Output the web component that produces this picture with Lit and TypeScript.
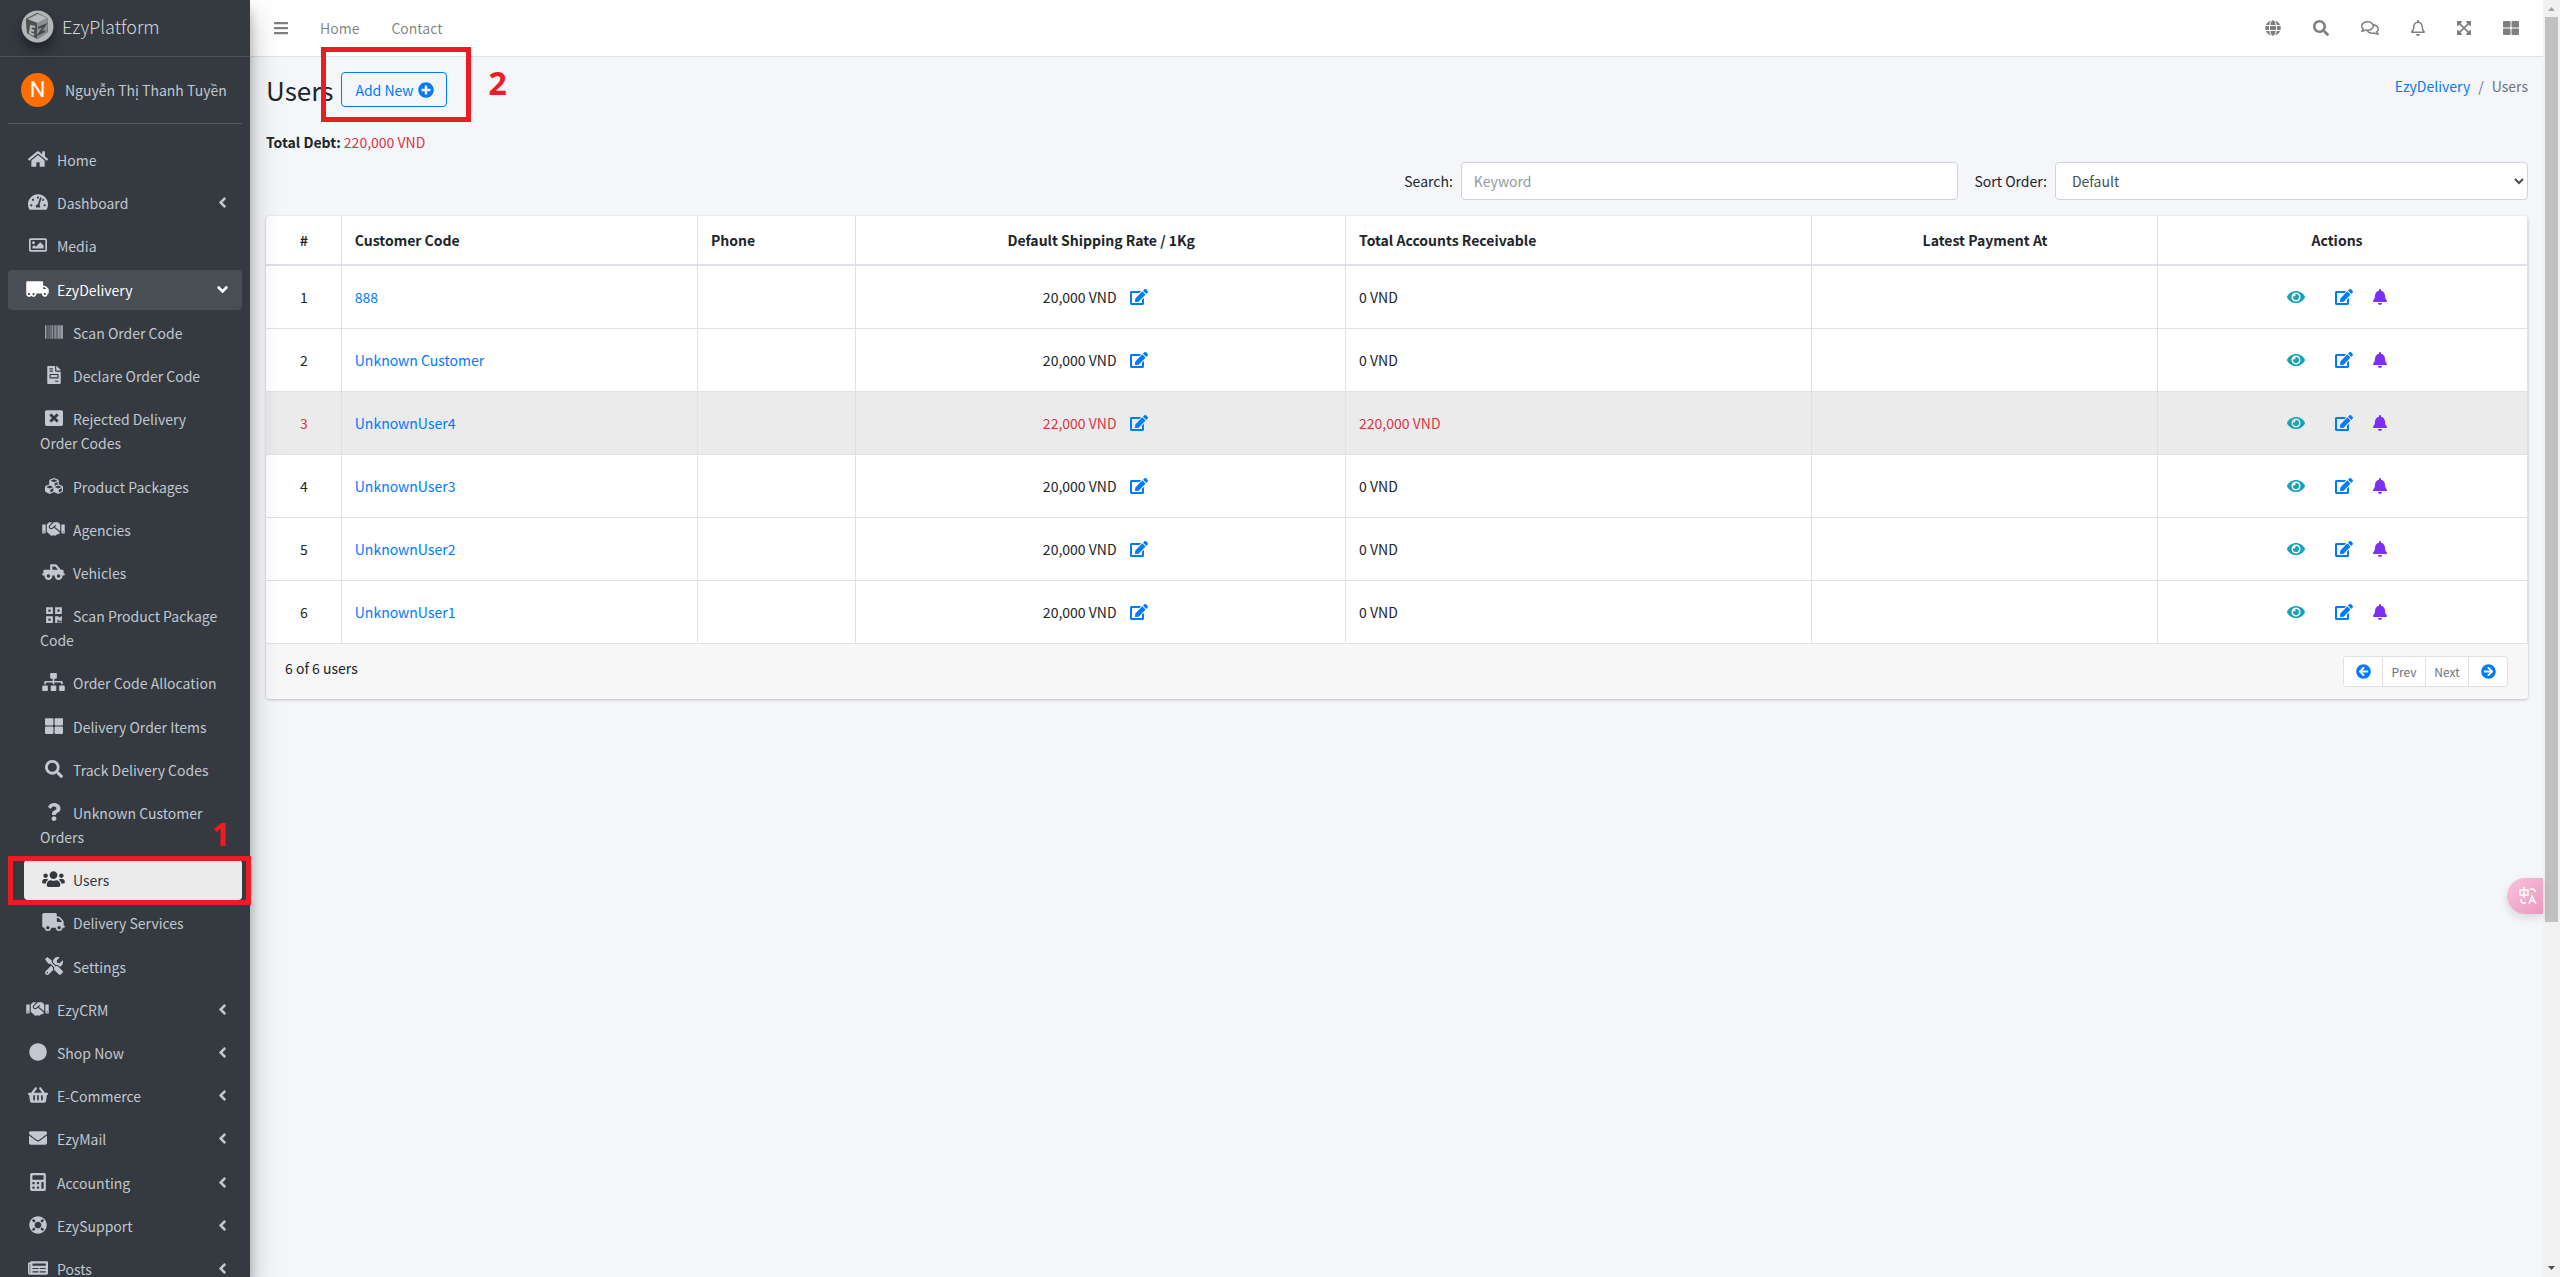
import { LitElement, html, css, svg, nothing } from "lit";
import { customElement, property } from "lit/decorators.js";
import { classMap } from "lit/directives/class-map.js";

/* Icon outlines, each as [view box width, path]; every one is 512 units high. */
const ICONS: Record<string, [number, string]> = {
  home: [576, "M280.37 148.26L96 300.11V464a16 16 0 0 0 16 16l112.06-.29a16 16 0 0 0 15.92-16V368a16 16 0 0 1 16-16h64a16 16 0 0 1 16 16v95.64a16 16 0 0 0 16 16.05L464 480a16 16 0 0 0 16-16V300L295.67 148.26a12.19 12.19 0 0 0-15.3 0zM571.6 251.47L488 182.56V44.05a12 12 0 0 0-12-12h-56a12 12 0 0 0-12 12v72.61L318.47 43a48 48 0 0 0-61 0L4.34 251.47a12 12 0 0 0-1.6 16.9l25.5 31A12 12 0 0 0 45.15 301l235.22-193.74a12.19 12.19 0 0 1 15.3 0L530.9 301a12 12 0 0 0 16.9-1.6l25.5-31a12 12 0 0 0-1.7-16.93z"],
  gauge: [576, "M288 32C128.94 32 0 160.94 0 320c0 52.8 14.25 102.26 39.06 144.8 5.61 9.62 16.3 15.2 27.44 15.2h443c11.14 0 21.83-5.58 27.44-15.2C561.75 422.26 576 372.8 576 320c0-159.06-128.94-288-288-288zm0 64c14.71 0 26.58 10.13 30.32 23.65-1.11 2.26-2.64 4.23-3.45 6.67l-9.22 27.67c-5.13 3.49-10.97 6.01-17.64 6.01-17.67 0-32-14.33-32-32S270.33 96 288 96zM96 384c-17.67 0-32-14.33-32-32s14.33-32 32-32 32 14.33 32 32-14.33 32-32 32zm48-160c-17.67 0-32-14.33-32-32s14.33-32 32-32 32 14.33 32 32-14.33 32-32 32zm246.77-72.41l-61.33 184C343.13 347.33 352 364.54 352 384c0 11.72-3.38 22.55-8.88 32H232.88c-5.5-9.45-8.88-20.28-8.88-32 0-33.94 26.5-61.43 59.9-63.59l61.34-184.01c4.17-12.56 17.73-19.45 30.36-15.17 12.57 4.19 19.35 17.79 15.17 30.36zm14.66 57.2l15.52-46.55c3.47-1.29 7.13-2.23 11.05-2.23 17.67 0 32 14.33 32 32s-14.33 32-32 32c-11.38-.01-20.89-6.28-26.57-15.22zM480 384c-17.67 0-32-14.33-32-32s14.33-32 32-32 32 14.33 32 32-14.33 32-32 32z"],
  image: [512, "M464 64H48C21.49 64 0 85.49 0 112v288c0 26.51 21.49 48 48 48h416c26.51 0 48-21.49 48-48V112c0-26.51-21.49-48-48-48zm-6 336H54a6 6 0 0 1-6-6V118a6 6 0 0 1 6-6h404a6 6 0 0 1 6 6v276a6 6 0 0 1-6 6zM128 152c-22.091 0-40 17.909-40 40s17.909 40 40 40 40-17.909 40-40-17.909-40-40-40zM96 352h320v-80l-87.515-87.515c-4.686-4.686-12.284-4.686-16.971 0L192 304l-39.515-39.515c-4.686-4.686-12.284-4.686-16.971 0L96 304v48z"],
  lorry: [640, "M621.3 237.3l-58.5-58.5c-12-12-28.3-18.7-45.3-18.7H480V64c0-17.7-14.3-32-32-32H32C14.3 32 0 46.3 0 64v336c0 44.2 35.8 80 80 80 26.3 0 49.4-12.9 64-32.4 14.6 19.6 37.7 32.4 64 32.4 44.2 0 80-35.8 80-80 0-5.5-.6-10.8-1.6-16h163.2c-1.1 5.2-1.6 10.5-1.6 16 0 44.2 35.8 80 80 80s80-35.8 80-80c0-5.5-.6-10.8-1.6-16H624c8.8 0 16-7.2 16-16v-85.5c0-17-6.7-33.2-18.7-45.2zM80 432c-17.6 0-32-14.4-32-32s14.4-32 32-32 32 14.4 32 32-14.4 32-32 32zm128 0c-17.6 0-32-14.4-32-32s14.4-32 32-32 32 14.4 32 32-14.4 32-32 32zm272-224h37.5c4.3 0 8.3 1.7 11.3 4.7l43.3 43.3H480v-48zm48 224c-17.6 0-32-14.4-32-32s14.4-32 32-32 32 14.4 32 32-14.4 32-32 32z"],
  truck: [640, "M624 352h-16V243.9c0-12.7-5.1-24.9-14.1-33.9L494 110.1c-9-9-21.2-14.1-33.9-14.1H416V48c0-26.5-21.5-48-48-48H48C21.5 0 0 21.5 0 48v320c0 26.5 21.5 48 48 48h16c0 53 43 96 96 96s96-43 96-96h128c0 53 43 96 96 96s96-43 96-96h48c8.8 0 16-7.2 16-16v-32c0-8.8-7.2-16-16-16zM160 464c-26.5 0-48-21.5-48-48s21.5-48 48-48 48 21.5 48 48-21.5 48-48 48zm320 0c-26.5 0-48-21.5-48-48s21.5-48 48-48 48 21.5 48 48-21.5 48-48 48zm80-208H416V144h44.1l99.9 99.9V256z"],
  barcode: [512, "M0 448V64h18v384H0zm26.857-.273V64H36v383.727h-9.143zm27.143 0V64h8.857v383.727H54zm44.857 0V64h8.857v383.727h-8.857zm36 0V64h17.714v383.727h-17.714zm44.857 0V64h8.857v383.727h-8.857zm18 0V64h8.857v383.727h-8.857zm18 0V64h8.857v383.727h-8.857zm35.715 0V64h18v383.727h-18zm44.857 0V64h18v383.727h-18zm35.999 0V64h18.001v383.727h-18.001zm36.001 0V64h18.001v383.727h-18.001zm26.857 0V64h18v383.727h-18zm45.143 0V64h26.857v383.727h-26.857zm35.714 0V64h9.143v383.727H476zm18 .273V64h18v384h-18z"],
  invoice: [384, "M288 256H96v64h192v-64zm89-151L279.1 7c-4.5-4.5-10.6-7-17-7H256v128h128v-6.1c0-6.3-2.5-12.4-7-16.9zm-153 31V0H24C10.7 0 0 10.7 0 24v464c0 13.3 10.7 24 24 24h336c13.3 0 24-10.7 24-24V160H248c-13.2 0-24-10.8-24-24zM64 72c0-4.42 3.58-8 8-8h80c4.42 0 8 3.58 8 8v16c0 4.42-3.58 8-8 8H72c-4.42 0-8-3.58-8-8V72zm0 64c0-4.42 3.58-8 8-8h80c4.42 0 8 3.58 8 8v16c0 4.42-3.58 8-8 8H72c-4.42 0-8-3.58-8-8v-16zm256 304c0 4.42-3.58 8-8 8h-80c-4.42 0-8-3.58-8-8v-16c0-4.42 3.58-8 8-8h80c4.42 0 8 3.58 8 8v16zm0-200v96c0 8.84-7.16 16-16 16H80c-8.84 0-16-7.16-16-16v-96c0-8.84 7.16-16 16-16h224c8.84 0 16 7.16 16 16z"],
  reject: [512, "M464 32H48C21.5 32 0 53.5 0 80v352c0 26.5 21.5 48 48 48h416c26.5 0 48-21.5 48-48V80c0-26.5-21.5-48-48-48zm-83.6 290.5c4.8 4.8 4.8 12.6 0 17.4l-40.5 40.5c-4.8 4.8-12.6 4.8-17.4 0L256 313.3l-66.5 67.1c-4.8 4.8-12.6 4.8-17.4 0l-40.5-40.5c-4.8-4.8-4.8-12.6 0-17.4l67.1-66.5-67.1-66.5c-4.8-4.8-4.8-12.6 0-17.4l40.5-40.5c4.8-4.8 12.6-4.8 17.4 0l66.5 67.1 66.5-67.1c4.8-4.8 12.6-4.8 17.4 0l40.5 40.5c4.8 4.8 4.8 12.6 0 17.4L313.3 256l67.1 66.5z"],
  cubes: [512, "M488.6 250.2L392 214V105.5c0-15-9.3-28.4-23.4-33.7l-100-37.5c-8.1-3.1-17.1-3.1-25.3 0l-100 37.5c-14.1 5.3-23.4 18.7-23.4 33.7V214l-96.6 36.2C9.3 255.5 0 268.9 0 283.9V394c0 13.6 7.7 26.1 19.9 32.2l100 50c10.1 5.1 22.1 5.1 32.2 0l103.9-52 103.9 52c10.1 5.1 22.1 5.1 32.2 0l100-50c12.2-6.1 19.9-18.6 19.9-32.2V283.9c0-15-9.3-28.4-23.4-33.7zM358 214.8l-85 31.9v-68.2l85-37v73.3zM154 104.1l102-38.2 102 38.2v.6l-102 41.4-102-41.4v-.6zm84 291.1l-85 42.5v-79.1l85-38.8v75.4zm0-112l-102 41.4-102-41.4v-.6l102-38.2 102 38.2v.6zm240 112l-85 42.5v-79.1l85-38.8v75.4zm0-112l-102 41.4-102-41.4v-.6l102-38.2 102 38.2v.6z"],
  handshake: [640, "M434.7 64h-85.9c-8 0-15.7 3-21.6 8.4l-98.3 90c-.1.1-.2.3-.3.4-16.6 15.6-16.3 40.5-2.1 56 12.7 13.9 39.4 17.6 56.1 2.7.1-.1.3-.1.4-.2l79.9-73.2c6.5-5.9 16.7-5.5 22.6 1 6 6.5 5.5 16.6-1 22.6l-26.1 23.9L504 313.8c2.9 2.4 5.5 5 7.9 7.7V128l-54.6-54.6c-5.9-6-14.1-9.4-22.6-9.4zM544 128.2v223.9c0 17.7 14.3 32 32 32h64V128.2h-96zm48 223.9c-8.8 0-16-7.2-16-16s7.2-16 16-16 16 7.2 16 16-7.2 16-16 16zM0 384h64c17.7 0 32-14.3 32-32V128.2H0V384zm48-63.9c8.8 0 16 7.2 16 16s-7.2 16-16 16-16-7.2-16-16c0-8.9 7.2-16 16-16zm435.9 18.6L334.6 217.5l-30 27.5c-29.7 27.1-75.2 24.5-101.7-4.4-26.9-29.4-24.8-74.9 4.4-101.7L289.1 64h-83.8c-8.5 0-16.6 3.4-22.6 9.4L128 128v223.9h18.3l90.5 81.9c27.4 22.3 67.7 18.1 90-9.3l.2-.2 17.9 15.5c15.9 13 39.4 10.5 52.3-5.4l31.4-38.6 5.4 4.4c13.7 11.1 33.9 9.1 45-4.7l9.5-11.7c11.2-13.8 9.1-33.9-4.6-45.1z"],
  pickup: [640, "M624 288h-16v-64c0-17.67-14.33-32-32-32h-48L419.22 56.02A64.025 64.025 0 0 0 369.24 32H256c-17.67 0-32 14.33-32 32v128H64c-17.67 0-32 14.33-32 32v64H16c-8.84 0-16 7.16-16 16v32c0 8.84 7.16 16 16 16h49.61c-.76 5.27-1.61 10.52-1.61 16 0 61.86 50.14 112 112 112s112-50.14 112-112c0-5.48-.85-10.73-1.61-16h67.23c-.76 5.27-1.61 10.52-1.61 16 0 61.86 50.14 112 112 112s112-50.14 112-112c0-5.48-.85-10.73-1.61-16H624c8.84 0 16-7.16 16-16v-32c0-8.84-7.16-16-16-16zM288 96h81.24l76.8 96H288V96zM176 416c-26.47 0-48-21.53-48-48s21.53-48 48-48 48 21.53 48 48-21.53 48-48 48zm288 0c-26.47 0-48-21.53-48-48s21.53-48 48-48 48 21.53 48 48-21.53 48-48 48z"],
  qrcode: [448, "M0 224h192V32H0v192zM64 96h64v64H64V96zm192-64v192h192V32H256zm128 128h-64V96h64v64zM0 480h192V288H0v192zm64-128h64v64H64v-64zm352-64h32v128h-96v-32h-32v96h-64V288h96v32h64v-32zm0 160h32v32h-32v-32zm-64 0h32v32h-32v-32z"],
  sitemap: [640, "M128 352H32c-17.67 0-32 14.33-32 32v96c0 17.67 14.33 32 32 32h96c17.67 0 32-14.33 32-32v-96c0-17.67-14.33-32-32-32zm-24-80h192v48h48v-48h192v48h48v-57.59c0-21.17-17.23-38.41-38.41-38.41H344v-64h40c17.67 0 32-14.33 32-32V32c0-17.67-14.33-32-32-32H256c-17.67 0-32 14.33-32 32v96c0 17.67 14.33 32 32 32h40v64H94.41C73.23 224 56 241.23 56 262.41V320h48v-48zm264 80h-96c-17.67 0-32 14.33-32 32v96c0 17.67 14.33 32 32 32h96c17.67 0 32-14.33 32-32v-96c0-17.67-14.33-32-32-32zm240 0h-96c-17.67 0-32 14.33-32 32v96c0 17.67 14.33 32 32 32h96c17.67 0 32-14.33 32-32v-96c0-17.67-14.33-32-32-32z"],
  tiles: [512, "M296 32h192c13.255 0 24 10.745 24 24v160c0 13.255-10.745 24-24 24H296c-13.255 0-24-10.745-24-24V56c0-13.255 10.745-24 24-24zm-80 0H24C10.745 32 0 42.745 0 56v160c0 13.255 10.745 24 24 24h192c13.255 0 24-10.745 24-24V56c0-13.255-10.745-24-24-24zM0 296v160c0 13.255 10.745 24 24 24h192c13.255 0 24-10.745 24-24V296c0-13.255-10.745-24-24-24H24c-13.255 0-24 10.745-24 24zm296 184h192c13.255 0 24-10.745 24-24V296c0-13.255-10.745-24-24-24H296c-13.255 0-24 10.745-24 24v160c0 13.255 10.745 24 24 24z"],
  search: [512, "M505 442.7L405.3 343c-4.5-4.5-10.6-7-17-7H372c27.6-35.3 44-79.7 44-128C416 93.1 322.9 0 208 0S0 93.1 0 208s93.1 208 208 208c48.3 0 92.7-16.4 128-44v16.3c0 6.4 2.5 12.5 7 17l99.7 99.7c9.4 9.4 24.6 9.4 33.9 0l28.3-28.3c9.4-9.4 9.4-24.6.1-34zM208 336c-70.7 0-128-57.2-128-128 0-70.7 57.2-128 128-128 70.7 0 128 57.2 128 128 0 70.7-57.2 128-128 128z"],
  question: [384, "M202.021 0C122.202 0 70.503 32.703 29.914 91.026c-7.363 10.58-5.093 25.086 5.178 32.874l43.138 32.709c10.373 7.865 25.132 6.026 33.253-4.148 25.049-31.381 43.63-49.449 82.757-49.449 30.764 0 68.816 19.799 68.816 49.631 0 22.552-18.617 34.134-48.993 51.164-35.423 19.86-82.299 44.576-82.299 106.405V320c0 13.255 10.745 24 24 24h72.471c13.255 0 24-10.745 24-24v-5.773c0-42.86 125.268-44.645 125.268-160.627C377.504 66.256 286.902 0 202.021 0zM192 373.459c-38.196 0-69.271 31.075-69.271 69.271 0 38.195 31.075 69.27 69.271 69.27s69.271-31.075 69.271-69.271-31.075-69.27-69.271-69.27z"],
  users: [640, "M96 224c35.3 0 64-28.7 64-64s-28.7-64-64-64-64 28.7-64 64 28.7 64 64 64zm448 0c35.3 0 64-28.7 64-64s-28.7-64-64-64-64 28.7-64 64 28.7 64 64 64zm32 32h-64c-17.6 0-33.5 7.1-45.1 18.6 40.3 22.1 68.9 62 75.1 109.4h66c17.7 0 32-14.3 32-32v-32c0-35.3-28.7-64-64-64zm-256 0c61.9 0 112-50.1 112-112S381.9 32 320 32 208 82.1 208 144s50.1 112 112 112zm76.8 32h-8.3c-20.8 10-43.9 16-68.5 16s-47.6-6-68.5-16h-8.3C179.6 288 128 339.6 128 403.2V432c0 26.5 21.5 48 48 48h288c26.5 0 48-21.5 48-48v-28.8c0-63.6-51.6-115.2-115.2-115.2zm-223.7-13.4C161.5 263.1 145.6 256 128 256H64c-35.3 0-64 28.7-64 64v32c0 17.7 14.3 32 32 32h65.9c6.3-47.4 34.9-87.3 75.2-109.4z"],
  tools: [512, "M501.1 395.7L384 278.6c-23.1-23.1-57.6-27.6-85.4-13.9L192 158.1V96L64 0 0 64l96 128h62.1l106.6 106.6c-13.6 27.8-9.2 62.3 13.9 85.4l117.1 117.1c14.6 14.6 38.2 14.6 52.7 0l52.7-52.7c14.5-14.6 14.5-38.2 0-52.7zM331.7 225c28.3 0 54.9 11 74.9 31l19.4 19.4c15.8-6.9 30.8-16.5 43.8-29.5 37.1-37.1 49.7-89.3 37.9-136.7-2.2-9-13.5-12.1-20.1-5.5l-74.4 74.4-67.9-11.3L334 98.9l74.4-74.4c6.6-6.6 3.4-17.9-5.7-20.2-47.4-11.7-99.6.9-136.6 37.9-28.5 28.5-41.9 66.1-41.2 103.6l82.1 82.1c8.1-1.9 16.5-2.9 24.7-2.9zm-103.9 82l-56.7-56.7L18.7 402.8c-25 25-25 65.5 0 90.5s65.5 25 90.5 0l123.6-123.6c-7.6-19.9-9.9-41.6-5-62.7zM64 472c-13.2 0-24-10.8-24-24 0-13.3 10.7-24 24-24s24 10.7 24 24c0 13.2-10.7 24-24 24z"],
  circle: [512, "M256 8C119 8 8 119 8 256s111 248 248 248 248-111 248-248S393 8 256 8z"],
  basket: [576, "M576 216v16c0 13.255-10.745 24-24 24h-8l-26.113 182.788C514.509 462.435 494.257 480 470.37 480H105.63c-23.887 0-44.139-17.565-47.518-41.212L32 256h-8c-13.255 0-24-10.745-24-24v-16c0-13.255 10.745-24 24-24h67.341l106.78-146.821c10.395-14.292 30.407-17.453 44.701-7.058 14.293 10.395 17.453 30.408 7.058 44.701L170.477 192h235.046L326.12 82.821c-10.395-14.292-7.234-34.306 7.059-44.701 14.291-10.395 34.306-7.235 44.701 7.058L484.659 192H552c13.255 0 24 10.745 24 24zM312 392V280c0-13.255-10.745-24-24-24s-24 10.745-24 24v112c0 13.255 10.745 24 24 24s24-10.745 24-24zm112 0V280c0-13.255-10.745-24-24-24s-24 10.745-24 24v112c0 13.255 10.745 24 24 24s24-10.745 24-24zm-224 0V280c0-13.255-10.745-24-24-24s-24 10.745-24 24v112c0 13.255 10.745 24 24 24s24-10.745 24-24z"],
  envelope: [512, "M502.3 190.8c3.9-3.1 9.7-.2 9.7 4.7V400c0 26.5-21.5 48-48 48H48c-26.5 0-48-21.5-48-48V195.6c0-5 5.7-7.8 9.7-4.7 22.4 17.4 52.1 39.5 154.1 113.6 21.1 15.4 56.7 47.8 92.2 47.6 35.7.3 72-32.8 92.3-47.6 102-74.1 131.6-96.3 154-113.7zM256 320c23.2.4 56.6-29.2 73.4-41.4 132.7-96.3 142.8-104.7 173.4-128.7 5.8-4.5 9.2-11.5 9.2-18.9v-19c0-26.5-21.5-48-48-48H48c-26.5 0-48 21.5-48 48v19c0 7.4 3.4 14.3 9.2 18.9 30.6 23.9 40.7 32.4 173.4 128.7 16.8 12.2 50.2 41.8 73.4 41.4z"],
  calculator: [448, "M400 0H48C22.4 0 0 22.4 0 48v416c0 25.6 22.4 48 48 48h352c25.6 0 48-22.4 48-48V48c0-25.6-22.4-48-48-48zM77 384h38q13 0 13 13v38q0 13-13 13H77q-13 0-13-13v-38q0-13 13-13zM77 256h38q13 0 13 13v38q0 13-13 13H77q-13 0-13-13v-38q0-13 13-13zM205 384h38q13 0 13 13v38q0 13-13 13h-38q-13 0-13-13v-38q0-13 13-13zM205 256h38q13 0 13 13v38q0 13-13 13h-38q-13 0-13-13v-38q0-13 13-13zM333 256h38q13 0 13 13v166q0 13-13 13h-38q-13 0-13-13V269q0-13 13-13zM77 64h294q13 0 13 13v102q0 13-13 13H77q-13 0-13-13V77q0-13 13-13z"],
  lifering: [512, "M256 8C119.033 8 8 119.033 8 256s111.033 248 248 248 248-111.033 248-248S392.967 8 256 8zm173.696 119.559l-63.399 63.399c-10.987-18.559-26.67-34.252-45.255-45.255l63.399-63.399a218.396 218.396 0 0 1 45.255 45.255zM256 352c-53.019 0-96-42.981-96-96s42.981-96 96-96 96 42.981 96 96-42.981 96-96 96zM127.559 82.304l63.399 63.399c-18.559 10.987-34.252 26.67-45.255 45.255l-63.399-63.399a218.372 218.372 0 0 1 45.255-45.255zM82.304 384.441l63.399-63.399c10.987 18.559 26.67 34.252 45.255 45.255l-63.399 63.399a218.396 218.396 0 0 1-45.255-45.255zm302.137 45.255l-63.399-63.399c18.559-10.987 34.252-26.67 45.255-45.255l63.399 63.399a218.403 218.403 0 0 1-45.255 45.255z"],
  newspaper: [576, "M552 64H88c-13.255 0-24 10.745-24 24v8H24c-13.255 0-24 10.745-24 24v272c0 30.928 25.072 56 56 56h472c26.51 0 48-21.49 48-48V88c0-13.255-10.745-24-24-24zM56 400a8 8 0 0 1-8-8V144h16v248a8 8 0 0 1-8 8zm236-16H140c-6.627 0-12-5.373-12-12v-8c0-6.627 5.373-12 12-12h152c6.627 0 12 5.373 12 12v8c0 6.627-5.373 12-12 12zm208 0H348c-6.627 0-12-5.373-12-12v-8c0-6.627 5.373-12 12-12h152c6.627 0 12 5.373 12 12v8c0 6.627-5.373 12-12 12zm-208-96H140c-6.627 0-12-5.373-12-12v-8c0-6.627 5.373-12 12-12h152c6.627 0 12 5.373 12 12v8c0 6.627-5.373 12-12 12zm208 0H348c-6.627 0-12-5.373-12-12v-8c0-6.627 5.373-12 12-12h152c6.627 0 12 5.373 12 12v8c0 6.627-5.373 12-12 12zm0-96H140c-6.627 0-12-5.373-12-12v-40c0-6.627 5.373-12 12-12h360c6.627 0 12 5.373 12 12v40c0 6.627-5.373 12-12 12z"],
  angleLeft: [256, "M31.7 239l136-136c9.4-9.4 24.6-9.4 33.9 0l22.6 22.6c9.4 9.4 9.4 24.6 0 33.9L127.9 256l96.4 96.4c9.4 9.4 9.4 24.6 0 33.9L201.7 409c-9.4 9.4-24.6 9.4-33.9 0l-136-136c-9.5-9.4-9.5-24.6-.1-34z"],
  globe: [496, "M336.5 160C322 70.7 287.8 8 248 8s-74 62.7-88.5 152h177zM152 256c0 22.2 1.2 43.5 3.3 64h185.3c2.1-20.5 3.3-41.8 3.3-64s-1.2-43.5-3.3-64H155.3c-2.1 20.5-3.3 41.8-3.3 64zm324.7-96c-28.6-67.9-86.5-120.4-158-141.6 24.4 33.8 41.2 84.7 50 141.6h108zM177.2 18.4C105.8 39.6 47.8 92.1 19.3 160h108c8.7-56.9 25.5-107.8 49.9-141.6zM487.4 192H372.7c2.1 21 3.3 42.5 3.3 64s-1.2 43-3.3 64h114.6c5.5-20.5 8.6-41.8 8.6-64s-3.1-43.5-8.5-64zM120 256c0-21.5 1.2-43 3.3-64H8.6C3.2 212.5 0 233.8 0 256s3.2 43.5 8.6 64h114.6c-2-21-3.2-42.5-3.2-64zm39.5 96c14.5 89.3 48.7 152 88.5 152s74-62.7 88.5-152h-177zm159.3 141.6c71.4-21.2 129.4-73.7 158-141.6h-108c-8.8 56.9-25.6 107.8-50 141.6zM19.3 352c28.6 67.9 86.5 120.4 158 141.6-24.4-33.8-41.2-84.7-50-141.6h-108z"],
  comments: [576, "M532 386.2c27.5-27.1 44-61.1 44-98.2 0-80-76.5-146.1-176.2-157.9C368.3 72.5 294.3 32 208 32 93.1 32 0 103.6 0 192c0 37 16.5 71 44 98.2-15.3 30.7-37.3 54.5-37.7 54.9-6.3 6.7-8.1 16.5-4.4 25 3.6 8.5 12 14 21.2 14 53.5 0 96.7-20.2 125.2-38.8 9.2 2.1 18.7 3.7 28.4 4.9C208.1 407.6 281.8 448 368 448c20.8 0 40.8-2.4 59.8-6.8C456.3 459.7 499.4 480 553 480c9.2 0 17.5-5.5 21.2-14 3.6-8.5 1.9-18.3-4.4-25-.4-.3-22.5-24.1-37.8-54.8zm-392.8-92.3L122.1 305c-14.1 9.1-28.5 16.3-43.1 21.4 2.7-4.7 5.4-9.7 8-14.8l15.5-31.1L77.7 256C64.2 242.6 48 220.7 48 192c0-60.7 73.3-112 160-112s160 51.3 160 112-73.3 112-160 112c-16.5 0-33-1.9-49-5.6l-19.8-4.5zM498.3 352l-24.7 24.4 15.5 31.1c2.6 5.1 5.3 10.1 8 14.8-14.6-5.1-29-12.3-43.1-21.4l-17.1-11.1-19.9 4.6c-16 3.7-32.5 5.6-49 5.6-54 0-102.2-20.1-131.3-49.7C338 339.5 416 272.9 416 192c0-3.4-.4-6.7-.7-10C479.7 196.5 528 238.8 528 288c0 28.7-16.2 50.6-29.7 64z"],
  bellOutline: [448, "M439.39 362.29c-19.32-20.76-55.47-51.99-55.47-154.29 0-77.7-54.48-139.9-127.94-155.16V32c0-17.67-14.32-32-31.98-32s-31.98 14.33-31.98 32v20.84C118.56 68.1 64.08 130.3 64.08 208c0 102.3-36.15 133.53-55.47 154.29-6 6.45-8.66 14.16-8.61 21.71.11 16.4 12.98 32 32.1 32h383.8c19.12 0 32-15.6 32.1-32 .05-7.55-2.61-15.27-8.61-21.71zM67.53 368c21.22-27.97 44.42-74.33 44.53-159.42 0-.2-.06-.38-.06-.58 0-61.86 50.14-112 112-112s112 50.14 112 112c0 .2-.06.38-.06.58.11 85.1 23.31 131.46 44.53 159.42H67.53zM224 512c35.32 0 63.97-28.65 63.97-64H160.03c0 35.35 28.65 64 63.97 64z"],
  bell: [448, "M224 512c35.32 0 63.97-28.65 63.97-64H160.03c0 35.35 28.65 64 63.97 64zm215.39-149.71c-19.32-20.76-55.47-51.99-55.47-154.29 0-77.7-54.48-139.9-127.94-155.16V32c0-17.67-14.32-32-31.98-32s-31.98 14.33-31.98 32v20.84C118.56 68.1 64.08 130.3 64.08 208c0 102.3-36.15 133.53-55.47 154.29-6 6.45-8.66 14.16-8.61 21.71.11 16.4 12.98 32 32.1 32h383.8c19.12 0 32-15.6 32.1-32 .05-7.55-2.61-15.27-8.61-21.71z"],
  expand: [448, "M448 344v112a23.94 23.94 0 0 1-24 24H312c-21.39 0-32.09-25.9-17-41l36.2-36.2L224 295.6 116.77 402.9 153 439c15.09 15.1 4.39 41-17 41H24a23.94 23.94 0 0 1-24-24V344c0-21.4 25.89-32.1 41-17l36.19 36.2L184.46 256 77.18 148.7 41 185c-15.1 15.1-41 4.4-41-17V56a23.94 23.94 0 0 1 24-24h112c21.39 0 32.09 25.9 17 41l-36.2 36.2L224 216.4l107.23-107.3L295 73c-15.09-15.1-4.39-41 17-41h112a23.94 23.94 0 0 1 24 24v112c0 21.4-25.89 32.1-41 17l-36.19-36.2L263.54 256l107.28 107.3L407 327.1c15.1-15.2 41-4.5 41 16.9z"],
  bars: [448, "M16 132h416c8.837 0 16-7.163 16-16V76c0-8.837-7.163-16-16-16H16C7.163 60 0 67.163 0 76v40c0 8.837 7.163 16 16 16zm0 160h416c8.837 0 16-7.163 16-16v-40c0-8.837-7.163-16-16-16H16c-8.837 0-16 7.163-16 16v40c0 8.837 7.163 16 16 16zm0 160h416c8.837 0 16-7.163 16-16v-40c0-8.837-7.163-16-16-16H16c-8.837 0-16 7.163-16 16v40c0 8.837 7.163 16 16 16z"],
  plus: [512, "M256 8C119 8 8 119 8 256s111 248 248 248 248-111 248-248S393 8 256 8zm144 276c0 6.6-5.4 12-12 12h-92v92c0 6.6-5.4 12-12 12h-56c-6.6 0-12-5.4-12-12v-92h-92c-6.6 0-12-5.4-12-12v-56c0-6.6 5.4-12 12-12h92v-92c0-6.6 5.4-12 12-12h56c6.6 0 12 5.4 12 12v92h92c6.6 0 12 5.4 12 12v56z"],
  eye: [576, "M572.52 241.4C518.29 135.59 410.93 64 288 64S57.68 135.64 3.48 241.41a32.35 32.35 0 0 0 0 29.19C57.71 376.41 165.07 448 288 448s230.32-71.64 284.52-177.41a32.35 32.35 0 0 0 0-29.19zM288 400a144 144 0 1 1 144-144 143.93 143.93 0 0 1-144 144zm0-240a95.31 95.31 0 0 0-25.31 3.79 47.85 47.85 0 0 1-66.9 66.9A95.78 95.78 0 1 0 288 160z"],
  edit: [576, "M402.6 83.2l90.2 90.2c3.8 3.8 3.8 10 0 13.8L274.4 405.6l-92.8 10.3c-12.4 1.4-22.9-9.1-21.5-21.5l10.3-92.8L388.8 83.2c3.8-3.8 10-3.8 13.8 0zm162-22.9l-48.8-48.8c-15.2-15.2-39.9-15.2-55.2 0l-35.4 35.4c-3.8 3.8-3.8 10 0 13.8l90.2 90.2c3.8 3.8 10 3.8 13.8 0l35.4-35.4c15.2-15.3 15.2-40 0-55.2zM384 346.2V448H64V128h229.8c3.2 0 6.2-1.3 8.5-3.5l40-40c7.6-7.6 2.2-20.5-8.5-20.5H48C21.5 64 0 85.5 0 112v352c0 26.5 21.5 48 48 48h352c26.5 0 48-21.5 48-48V306.2c0-10.7-12.9-16-20.5-8.5l-40 40c-2.2 2.3-3.5 5.3-3.5 8.5z"],
  arrowLeft: [512, "M256 504C119 504 8 393 8 256S119 8 256 8s248 111 248 248-111 248-248 248zm28.9-143.6L209.4 288H392c13.3 0 24-10.7 24-24v-16c0-13.3-10.7-24-24-24H209.4l75.5-72.4c9.7-9.3 9.9-24.8.4-34.3l-11-10.9c-9.4-9.4-24.6-9.4-33.9 0L107.7 239c-9.4 9.4-9.4 24.6 0 33.9l132.7 132.7c9.4 9.4 24.6 9.4 33.9 0l11-10.9c9.5-9.5 9.3-25-.4-34.3z"],
  arrowRight: [512, "M256 8c137 0 248 111 248 248S393 504 256 504 8 393 8 256 119 8 256 8zm-28.9 143.6l75.5 72.4H120c-13.3 0-24 10.7-24 24v16c0 13.3 10.7 24 24 24h182.6l-75.5 72.4c-9.7 9.3-9.9 24.8-.4 34.3l11 10.9c9.4 9.4 24.6 9.4 33.9 0L404.3 273c9.4-9.4 9.4-24.6 0-33.9L271.6 106.3c-9.4-9.4-24.6-9.4-33.9 0l-11 10.9c-9.5 9.6-9.3 25.1.4 34.4z"],
};

/* Draws an icon `size` pixels high, as wide as its outline asks for. */
const icon = (name: string, size = 16) => {
  const [w, d] = ICONS[name];
  return html`<svg class="icon" width=${Math.round((w / 512) * size)} height=${size}
    viewBox="0 0 ${w} 512" aria-hidden="true">${svg`<path fill="currentColor" fill-rule="evenodd" d=${d}></path>`}</svg>`;
};

const shared = css`
  *, *::before, *::after { box-sizing: border-box; }
  a { color: #007bff; text-decoration: none; }
  button { font: inherit; color: inherit; background: none; border: 0; padding: 0; cursor: pointer; }
  .icon { display: block; flex: none; }
  .callout { position: absolute; border: 5px solid #ed1c24; pointer-events: none; }
  .callout-number {
    position: absolute; color: #ed1c24; pointer-events: none;
    font: 700 32px/32px "Open Sans", "Noto Sans", sans-serif;
  }
`;

interface NavEntry { icon: string; label: string; expandable?: boolean; open?: boolean; active?: boolean; children?: NavEntry[]; }

const NAV: NavEntry[] = [
  { icon: "home", label: "Home" },
  { icon: "gauge", label: "Dashboard", expandable: true },
  { icon: "image", label: "Media" },
  {
    icon: "lorry", label: "EzyDelivery", expandable: true, open: true,
    children: [
      { icon: "barcode", label: "Scan Order Code" },
      { icon: "invoice", label: "Declare Order Code" },
      { icon: "reject", label: "Rejected Delivery Order Codes" },
      { icon: "cubes", label: "Product Packages" },
      { icon: "handshake", label: "Agencies" },
      { icon: "pickup", label: "Vehicles" },
      { icon: "qrcode", label: "Scan Product Package Code" },
      { icon: "sitemap", label: "Order Code Allocation" },
      { icon: "tiles", label: "Delivery Order Items" },
      { icon: "search", label: "Track Delivery Codes" },
      { icon: "question", label: "Unknown Customer Orders" },
      { icon: "users", label: "Users", active: true },
      { icon: "truck", label: "Delivery Services" },
      { icon: "tools", label: "Settings" },
    ],
  },
  { icon: "handshake", label: "EzyCRM", expandable: true },
  { icon: "circle", label: "Shop Now", expandable: true },
  { icon: "basket", label: "E-Commerce", expandable: true },
  { icon: "envelope", label: "EzyMail", expandable: true },
  { icon: "calculator", label: "Accounting", expandable: true },
  { icon: "lifering", label: "EzySupport", expandable: true },
  { icon: "newspaper", label: "Posts", expandable: true },
];

@customElement("side-bar")
export class SideBar extends LitElement {
  static styles = [shared, css`
    :host { display: block; background: #343a40; color: #c2c7d0; }
    .brand {
      display: flex; align-items: center; gap: 8px; height: 57px; padding: 0 0 4px 21px;
      border-bottom: 1px solid #4b545c; color: rgba(255, 255, 255, .8); font-size: 18px; font-weight: 300; line-height: 30px;
    }
    .logo { display: block; border-radius: 50%; box-shadow: 0 10px 20px rgba(0, 0, 0, .19), 0 6px 6px rgba(0, 0, 0, .23); }
    .user {
      display: flex; align-items: center; gap: 11px; margin: 0 8px; padding: 16px 0 16px 13px;
      border-bottom: 1px solid #4f5962;
    }
    .avatar {
      width: 33px; height: 34px; border-radius: 50%; background: #ff6d00; color: #fff;
      font: 22px/34px Roboto, sans-serif; text-align: center;
    }
    .user a { color: inherit; white-space: nowrap; }
    ul { list-style: none; margin: 0; padding: 0; }
    .tree { margin: 16px 8px 0; }
    .item { position: relative; margin-bottom: 3px; }
    .item:nth-child(5n + 3) { margin-bottom: 4px; }
    .link { display: block; position: relative; padding: 8px 16px; border-radius: 4px; color: #c2c7d0; }
    .sub { margin-top: 3px; padding-left: 16px; }
    .item.has-children { margin-bottom: 0; }
    .slot { display: inline-flex; width: 27px; height: 18px; margin-right: 6px; justify-content: center; align-items: center; vertical-align: -2px; }
    .angle { position: absolute; right: 15px; top: 11px; }
    .open > .angle { transform: rotate(-90deg); }
    .open { background: rgba(255, 255, 255, .1); color: #fff; }
    .active { background: rgba(255, 255, 255, .9); color: #343a40; }
    .callout { inset: -4px -9px -5px -16px; }
    .callout-number { right: 12px; bottom: 50px; }
  `];

  private entry(e: NavEntry): unknown {
    return html`<li class=${classMap({ item: true, "has-children": !!e.children })}>
      <a href="#" class=${classMap({ link: true, open: !!e.open, active: !!e.active })}
        ><span class="slot">${icon(e.icon, 18)}</span>${e.label}${e.expandable
          ? html`<span class="angle">${icon("angleLeft", 17)}</span>` : nothing}</a>
      ${e.active ? html`<span class="callout"></span><span class="callout-number">1</span>` : nothing}
      ${e.children ? html`<ul class="sub">${e.children.map((c) => this.entry(c))}</ul>` : nothing}
    </li>`;
  }

  render() {
    return html`
      <a class="brand" href="#">
        <svg class="logo" width="33" height="33" viewBox="0 0 33 33" aria-hidden="true">
          <circle cx="16.500" cy="16.500" r="16" fill="#b4b5b6"></circle>
          <path d="M5 9L17 3l10 5v14l-10 7L6 23z" fill="#6c6e70"></path>
          <path d="M7 9l10-5 9 4-10 5z" fill="#b9babb"></path>
          <path d="M5 9l11 4v16L6 23z" fill="#4d4f51"></path>
          <path d="M27 8l-11 5v16l10-7z" fill="#8e9092"></path>
          <path d="M5 9L17 3" fill="none" stroke="#56585a" stroke-width="1"></path>
          <path d="M14 17l-4-1-1 7 4 2M10 20l3 1" fill="none" stroke="#b4b5b6" stroke-width="2"></path>
          <path d="M17 18l7-3-6 9 6-3" fill="none" stroke="#47494b" stroke-width="2"></path>
        </svg>
        <span>EzyPlatform</span>
      </a>
      <div class="user"><span class="avatar">N</span><a href="#">Nguyễn Thị Thanh Tuyền</a></div>
      <nav aria-label="Main"><ul class="tree">${NAV.map((e) => this.entry(e))}</ul></nav>
    `;
  }
}

@customElement("top-bar")
export class TopBar extends LitElement {
  static styles = [shared, css`
    :host {
      display: flex; justify-content: space-between; align-items: center; height: 57px; padding: 0 24px;
      background: #fff; border-bottom: 1px solid #dee2e6; color: rgba(0, 0, 0, .5);
    }
    .group { display: flex; align-items: center; gap: 32px; }
    a { color: inherit; }
  `];

  render() {
    const tools: [string, string][] = [
      ["globe", "Language"], ["search", "Search"], ["comments", "Messages"],
      ["bellOutline", "Notifications"], ["expand", "Full screen"], ["tiles", "Panels"],
    ];
    return html`
      <nav class="group" aria-label="Top">
        <button aria-label="Toggle menu">${icon("bars")}</button>
        <a href="#">Home</a><a href="#">Contact</a>
      </nav>
      <div class="group">${tools.map(([i, label]) => html`<button aria-label=${label}>${icon(i)}</button>`)}</div>
    `;
  }
}

interface User { code: string; rate: string; receivable: string; debt?: boolean; }

const USERS: User[] = [
  { code: "888", rate: "20,000 VND", receivable: "0 VND" },
  { code: "Unknown Customer", rate: "20,000 VND", receivable: "0 VND" },
  { code: "UnknownUser4", rate: "22,000 VND", receivable: "220,000 VND", debt: true },
  { code: "UnknownUser3", rate: "20,000 VND", receivable: "0 VND" },
  { code: "UnknownUser2", rate: "20,000 VND", receivable: "0 VND" },
  { code: "UnknownUser1", rate: "20,000 VND", receivable: "0 VND" },
];

@customElement("user-table")
export class UserTable extends LitElement {
  @property({ attribute: false }) users: User[] = [];

  static styles = [shared, css`
    :host {
      display: block; background: #fff; border-radius: 4px; overflow: hidden;
      box-shadow: 0 0 1px rgba(0, 0, 0, .13), 0 1px 3px rgba(0, 0, 0, .2);
    }
    table { width: 100%; table-layout: fixed; border-collapse: separate; border-spacing: 0; }
    .c-index { width: 3.35%; }
    .c-code { width: 15.75%; }
    .c-phone { width: 7%; }
    .c-rate { width: 21.65%; }
    .c-total { width: 20.6%; }
    .c-paid { width: 15.3%; }
    th, td { padding: 0 12px 0 13px; border-right: 1px solid #dee2e6; text-align: left; }
    th { height: 50px; border-bottom: 2px solid #dee2e6; font-weight: 700; }
    td { height: 63px; border-bottom: 1px solid #dee2e6; }
    th:last-child, td:last-child { padding-right: 24px; }
    .mid { text-align: center; }
    .debt { background: #ebebeb; }
    .debt .due { color: #dc3545; }
    .rate { display: flex; align-items: center; justify-content: center; }
    .rate button { padding: 0 12px 0 13px; color: #007bff; }
    .actions { display: flex; align-items: center; justify-content: center; }
    .view { color: #17a2b8; margin-right: 30px; }
    .modify { color: #007bff; margin-right: 20px; }
    .notify { color: #7b2ff7; }
    .foot { display: flex; justify-content: space-between; align-items: flex-start; padding: 12px 20px 12px 19px; background: #f7f7f7; }
    .pages { display: flex; }
    .pages button {
      display: flex; align-items: center; justify-content: center; height: 31px; min-width: 40px; padding: 0 8px;
      margin-left: -1px; border: 1px solid #dee2e6; background: #fff; color: #007bff;
    }
    .pages .step { min-width: 44px; color: #6c757d; font-size: 12px; line-height: 21px; }
    .pages button:first-child { border-radius: 3px 0 0 3px; margin-left: 0; }
    .pages button:last-child { border-radius: 0 3px 3px 0; }
  `];

  render() {
    return html`
      <table>
        <thead><tr>
          <th class="mid c-index">#</th>
          <th class="c-code">Customer Code</th>
          <th class="c-phone">Phone</th>
          <th class="mid c-rate">Default Shipping Rate / 1Kg</th>
          <th class="c-total">Total Accounts Receivable</th>
          <th class="mid c-paid">Latest Payment At</th>
          <th class="mid">Actions</th>
        </tr></thead>
        <tbody>${this.users.map((u, i) => html`
          <tr class=${classMap({ debt: !!u.debt })}>
            <td class="mid due">${i + 1}</td>
            <td><a href="#">${u.code}</a></td>
            <td></td>
            <td><div class="rate"><span class="due">${u.rate}</span><button aria-label="Edit rate">${icon("edit")}</button></div></td>
            <td class="due">${u.receivable}</td>
            <td></td>
            <td><div class="actions">
              <button class="view" aria-label="View">${icon("eye")}</button>
              <button class="modify" aria-label="Edit">${icon("edit")}</button>
              <button class="notify" aria-label="Notify">${icon("bell")}</button>
            </div></td>
          </tr>`)}
        </tbody>
      </table>
      <div class="foot">
        <span>${this.users.length} of ${this.users.length} users</span>
        <div class="pages">
          <button aria-label="First page">${icon("arrowLeft", 15)}</button>
          <button class="step">Prev</button>
          <button class="step">Next</button>
          <button aria-label="Last page">${icon("arrowRight", 15)}</button>
        </div>
      </div>
    `;
  }
}

@customElement("app-root")
export class AppRoot extends LitElement {
  static styles = [shared, css`
    :host {
      display: flex; position: relative; height: 100vh; overflow: hidden; background: #f4f6f9; color: #212529;
      font: 14px/24px "Noto Sans CJK SC", "Open Sans", sans-serif;
    }
    side-bar {
      flex: none; width: 250px; height: 100vh; z-index: 2;
      box-shadow: 0 14px 28px rgba(0, 0, 0, .25), 0 10px 10px rgba(0, 0, 0, .22);
    }
    .page { flex: 1; min-width: 0; }
    main { padding: 15px 15px 0 16px; }
    .heading { display: flex; justify-content: space-between; align-items: flex-start; }
    .title { display: flex; align-items: center; gap: 8px; }
    h1 { margin: 0; font-size: 26px; font-weight: 400; line-height: 34px; }
    .add { position: relative; }
    .add button {
      display: flex; align-items: center; gap: 4px; height: 35px; padding: 0 12px 0 13px;
      border: 1px solid #007bff; border-radius: 4px; color: #007bff; line-height: 22px;
    }
    .callout { inset: -25px -24px -15px -20px; }
    .callout-number { left: 147px; top: -5px; }
    .crumbs { display: flex; gap: 8px; margin: 2px 0 0; padding: 0; list-style: none; color: #6c757d; }
    .debt { margin: 23px 0 8px; }
    .debt span { color: #dc3545; }
    .filters {
      display: grid; grid-template-columns: 1fr auto 22% auto calc(21% - 2px); align-items: center;
      column-gap: 8px; margin-bottom: 16px;
    }
    .search-label { grid-column: 2; }
    .sort-label { margin-left: 8px; }
    .field {
      width: 100%; height: 38px; padding: 0 12px; border: 1px solid #ced4da; border-radius: 4px;
      background: #fff; color: #495057; font: inherit;
    }
    .field::placeholder { color: #939ba2; opacity: 1; }
    .scroll {
      display: flex; flex: none; flex-direction: column; align-items: center; width: 17px; background: #f1f1f1;
    }
    .scroll-btn { flex: none; width: 17px; height: 17px; }
    .thumb { flex: 905; width: 13px; background: #c1c1c1; }
    .rest { flex: 338; }
    .translate {
      position: absolute; right: 17px; top: 878px; width: 36px; height: 36px; padding-left: 12px;
      border-radius: 18px 0 0 18px; background: linear-gradient(135deg, #fbc2dc, #e999bf);
      box-shadow: 0 4px 10px rgba(0, 0, 0, .12);
    }
    .translate svg { display: block; }
  `];

  render() {
    return html`
      <side-bar></side-bar>
      <div class="page">
        <top-bar></top-bar>
        <main>
          <div class="heading">
            <div class="title">
              <h1>Users</h1>
              <div class="add">
                <button>Add New ${icon("plus")}</button>
                <span class="callout"></span><span class="callout-number">2</span>
              </div>
            </div>
            <ol class="crumbs"><li><a href="#">EzyDelivery</a></li><li>/</li><li>Users</li></ol>
          </div>
          <p class="debt"><b>Total Debt:</b> <span>220,000 VND</span></p>
          <div class="filters">
            <label class="search-label" for="keyword">Search:</label>
            <input class="field" id="keyword" type="text" placeholder="Keyword">
            <label class="sort-label" for="sort">Sort Order:</label>
            <select class="field" id="sort"><option>Default</option></select>
          </div>
          <user-table .users=${USERS}></user-table>
        </main>
      </div>
      <div class="scroll" aria-hidden="true">
        <svg class="scroll-btn" viewBox="0 0 17 17"><path d="M5 11h7L8.500 7z" fill="#a3a3a3"></path></svg>
        <span class="thumb"></span><span class="rest"></span>
        <svg class="scroll-btn" viewBox="0 0 17 17"><path d="M5 6h7l-3.500 4z" fill="#505050"></path></svg>
      </div>
      <button class="translate" aria-label="Translate">
        <svg width="18" height="18" viewBox="0 0 18 18" fill="none" stroke="#fff" stroke-width="1.500" aria-hidden="true">
          <path d="M1 3h8v5H1zM5 0v11M11 2h2a3 3 0 0 1 3 3M2 12v1a3 3 0 0 0 3 3h2M10 17l3-8 4 8M11 14h5"></path>
        </svg>
      </button>
    `;
  }
}
